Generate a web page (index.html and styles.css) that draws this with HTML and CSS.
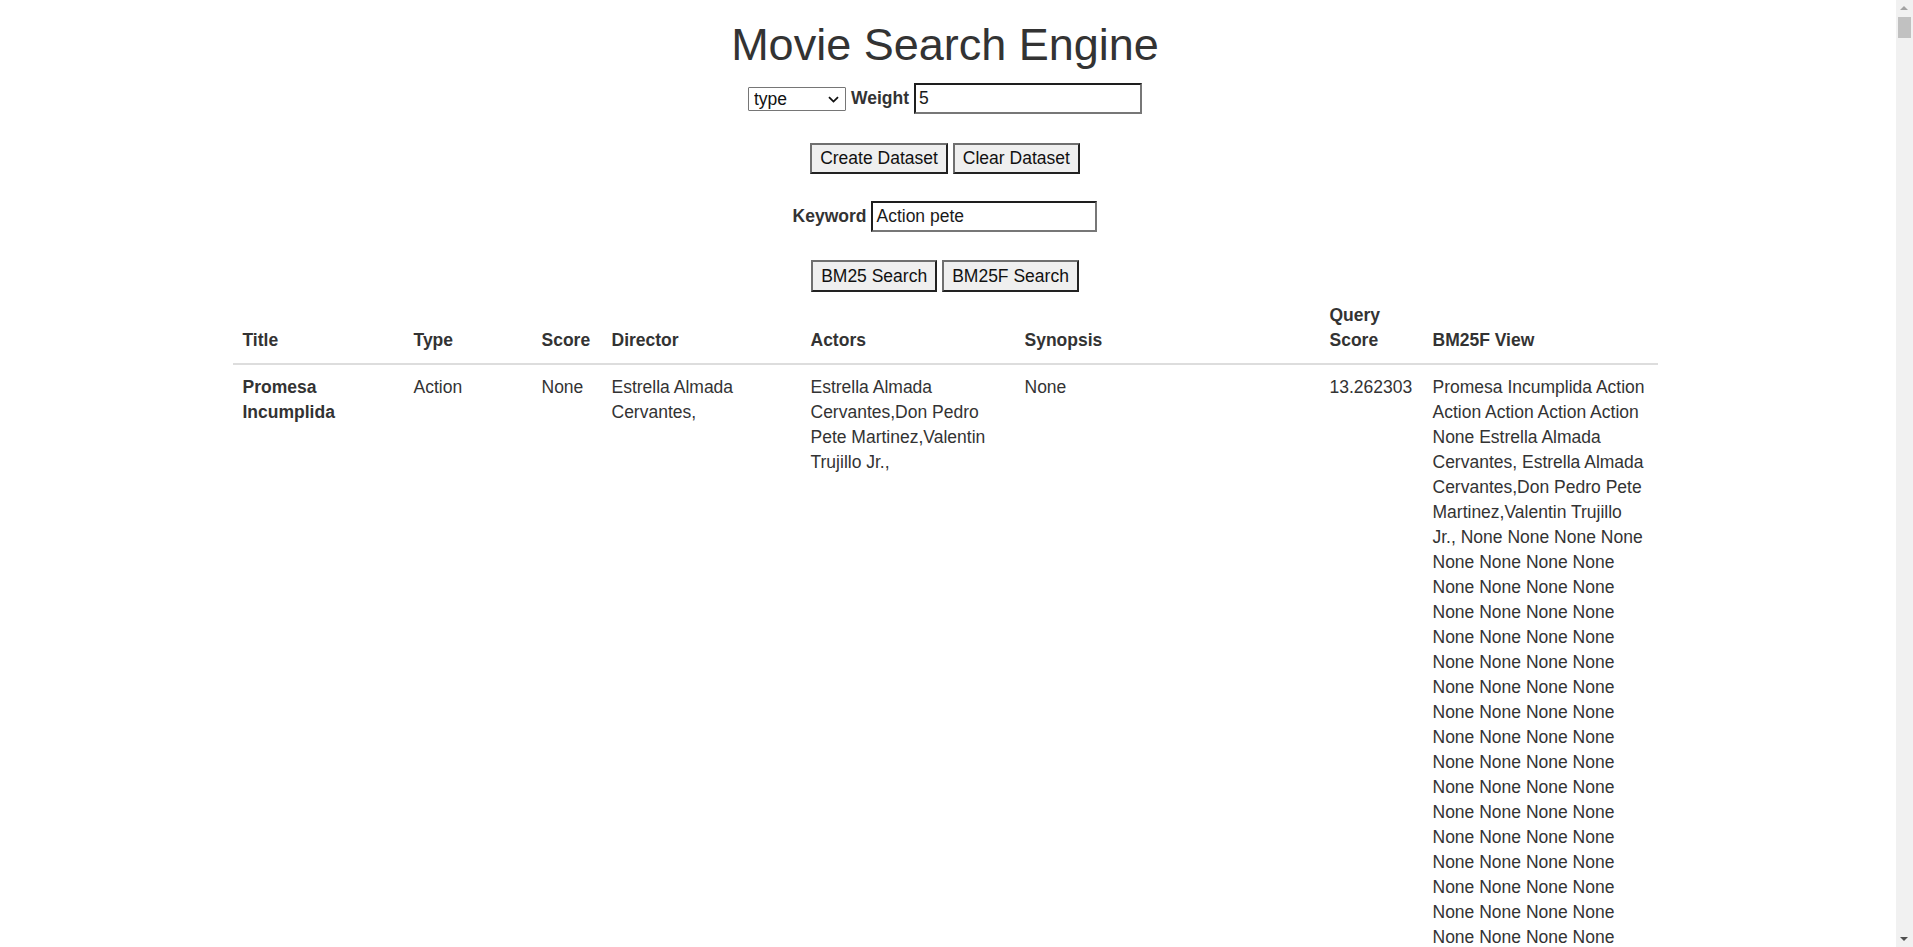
FILE: index.html
```html
<!DOCTYPE html>
<html lang="en">
<head>
<meta charset="utf-8">
<title>Movie Search Engine</title>
<link rel="stylesheet" href="styles.css">
</head>
<body>
<div class="page">
  <h1 class="title">Movie Search Engine</h1>

  <div class="row row-weight">
    <span class="select-wrap">
      <select class="field-select">
        <option>type</option>
        <option>title</option>
        <option>director</option>
        <option>actors</option>
        <option>synopsis</option>
      </select>
      <svg class="chevron" width="11" height="7" viewBox="0 0 11 7" aria-hidden="true">
        <path d="M1 1.2 L5.5 5.6 L10 1.2" fill="none" stroke="#111" stroke-width="1.8"/>
      </svg>
    </span>
    <label class="label">Weight</label>
    <input class="text-input input-weight" type="text" value="5">
  </div>

  <div class="row row-dataset">
    <button class="btn">Create Dataset</button>
    <button class="btn">Clear Dataset</button>
  </div>

  <div class="row row-keyword">
    <label class="label">Keyword</label>
    <input class="text-input input-keyword" type="text" value="Action pete">
  </div>

  <div class="row row-search">
    <button class="btn">BM25 Search</button>
    <button class="btn">BM25F Search</button>
  </div>

  <table class="results">
    <colgroup>
      <col class="c-title">
      <col class="c-type">
      <col class="c-score">
      <col class="c-director">
      <col class="c-actors">
      <col class="c-synopsis">
      <col class="c-query">
      <col class="c-view">
    </colgroup>
    <thead>
      <tr>
        <th>Title</th>
        <th>Type</th>
        <th>Score</th>
        <th>Director</th>
        <th>Actors</th>
        <th>Synopsis</th>
        <th>Query Score</th>
        <th>BM25F View</th>
      </tr>
    </thead>
    <tbody>
      <tr>
        <td class="cell-title">Promesa Incumplida</td>
        <td>Action</td>
        <td>None</td>
        <td>Estrella Almada Cervantes,</td>
        <td>Estrella Almada Cervantes,Don Pedro Pete Martinez,Valentin Trujillo Jr.,</td>
        <td>None</td>
        <td>13.262303</td>
        <td>Promesa Incumplida Action Action Action Action Action None Estrella Almada Cervantes, Estrella Almada Cervantes,Don Pedro Pete Martinez,Valentin Trujillo Jr., None None None None None None None None None None None None None None None None None None None None None None None None None None None None None None None None None None None None None None None None None None None None None None None None None None None None None None None None None None None None None None None None None None None None None None None None None None None None None None None None None None None None None None None None None None None None None None None None None None None None None None None None None None None None None None None None None</td>
      </tr>
    </tbody>
  </table>
</div>

<div class="scrollbar">
  <div class="sb-up"></div>
  <div class="sb-thumb"></div>
  <div class="sb-down"></div>
</div>
</body>
</html>
```

FILE: styles.css
```css
html, body {
  margin: 0;
  padding: 0;
  height: 947px;
  overflow: hidden;
  background: #fff;
}

body {
  font-family: "Liberation Sans", Arial, Helvetica, sans-serif;
  font-size: 17.5px;
  line-height: 25px;
  color: #333;
}

.page {
  width: 1890px;
  height: 947px;
  overflow: hidden;
}

.title {
  margin: 20px 0 0;
  font-size: 45px;
  line-height: 50px;
  font-weight: normal;
  text-align: center;
  color: #333;
}

.row {
  display: flex;
  justify-content: center;
  align-items: center;
  gap: 5px;
}

.row-weight { margin-top: 13px; height: 31px; }
.row-dataset { margin-top: 29px; height: 31px; }
.row-keyword { margin-top: 27px; height: 31px; }
.row-search { margin-top: 28px; height: 32px; }

.label {
  font-weight: bold;
  color: #333;
}

.select-wrap {
  position: relative;
  display: inline-flex;
}

.field-select {
  -webkit-appearance: none;
  appearance: none;
  box-sizing: border-box;
  width: 98px;
  height: 24px;
  margin: 0;
  padding: 0 20px 0 5px;
  font-family: "Liberation Sans", Arial, sans-serif;
  font-size: 17.5px;
  line-height: 22px;
  color: #111;
  background: #fff;
  border: 1px solid #767676;
  border-radius: 1px;
}

.chevron {
  position: absolute;
  right: 7px;
  top: 9px;
  pointer-events: none;
}

.text-input {
  box-sizing: border-box;
  height: 31px;
  margin: 0;
  padding: 0 3px;
  font-family: "Liberation Sans", Arial, sans-serif;
  font-size: 17.5px;
  color: #1a1a1a;
  background: #fff;
  border-style: solid;
  border-width: 2px;
  border-color: #1e1e1e #777 #777 #1e1e1e;
  outline: none;
}

.input-weight { width: 228px; }
.input-keyword { width: 226px; }

.btn {
  box-sizing: border-box;
  height: 100%;
  margin: 0;
  padding: 0 8px;
  font-family: "Liberation Sans", Arial, sans-serif;
  font-size: 17.5px;
  color: #111;
  background: #efefef;
  border-style: solid;
  border-width: 2px;
  border-color: #6f6f6f #222 #222 #6f6f6f;
  border-radius: 0;
}

.results {
  width: 1425px;
  margin: 1px auto 0;
  border-collapse: collapse;
  table-layout: fixed;
}

.c-title { width: 171px; }
.c-type { width: 128px; }
.c-score { width: 70px; }
.c-director { width: 199px; }
.c-actors { width: 214px; }
.c-synopsis { width: 305px; }
.c-query { width: 103px; }
.c-view { width: 235px; }

.results th {
  padding: 10px;
  text-align: left;
  vertical-align: bottom;
  font-weight: bold;
  border-bottom: 2px solid #ddd;
}

.results td {
  padding: 10px;
  vertical-align: top;
}

.results .cell-title {
  font-weight: bold;
}

.scrollbar {
  position: fixed;
  top: 0;
  right: 0;
  width: 17px;
  height: 947px;
  background: #f1f1f1;
}

.sb-up {
  position: absolute;
  top: 6px;
  left: 4px;
  width: 0;
  height: 0;
  border-left: 4px solid transparent;
  border-right: 4px solid transparent;
  border-bottom: 4px solid #a3a3a3;
}

.sb-thumb {
  position: absolute;
  top: 17px;
  left: 2px;
  width: 13px;
  height: 21px;
  background: #c1c1c1;
}

.sb-down {
  position: absolute;
  bottom: 6px;
  left: 4px;
  width: 0;
  height: 0;
  border-left: 4px solid transparent;
  border-right: 4px solid transparent;
  border-top: 4px solid #505050;
}
```
